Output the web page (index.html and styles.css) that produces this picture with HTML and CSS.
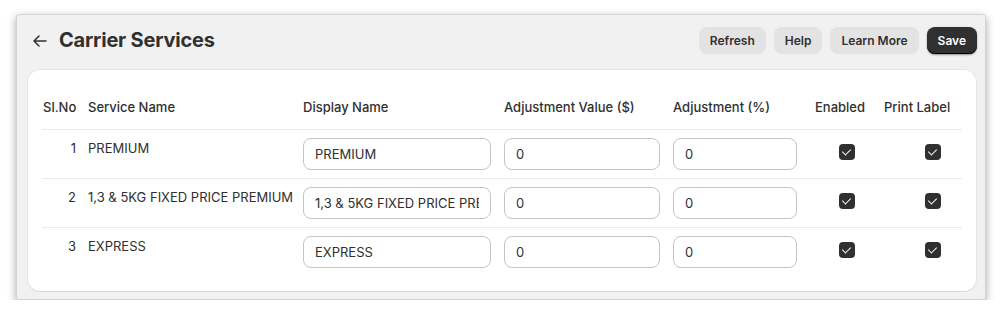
FILE: index.html
```html
<!DOCTYPE html>
<html lang="en">
<head>
    <meta charset="UTF-8">
    <meta name="viewport" content="width=device-width, initial-scale=1.0">
    <title>Carrier Services</title>
    <link rel="stylesheet" href="styles.css">
</head>
<body>
    <div class="window">
        <div class="page-header">
            <div class="title-wrap">
                <span class="back-arrow">
                    <svg width="14" height="12" viewBox="0 0 14 12" fill="none" stroke="#303030" stroke-width="1.5" stroke-linecap="round" stroke-linejoin="round">
                        <path d="M13 6H1.5M6 1L1 6l5 5"/>
                    </svg>
                </span>
                <h1>Carrier Services</h1>
            </div>
            <div class="actions">
                <button class="btn">Refresh</button>
                <button class="btn">Help</button>
                <button class="btn">Learn More</button>
                <button class="btn btn-primary">Save</button>
            </div>
        </div>

        <div class="card">
            <table class="services">
                <colgroup>
                    <col class="c-no">
                    <col class="c-name">
                    <col class="c-display">
                    <col class="c-value">
                    <col class="c-pct">
                    <col class="c-enabled">
                    <col class="c-label">
                </colgroup>
                <thead>
                    <tr>
                        <th>Sl.No</th>
                        <th>Service Name</th>
                        <th>Display Name</th>
                        <th>Adjustment Value ($)</th>
                        <th>Adjustment (%)</th>
                        <th>Enabled</th>
                        <th>Print Label</th>
                    </tr>
                </thead>
                <tbody>
                    <tr>
                        <td class="num">1</td>
                        <td class="text">PREMIUM</td>
                        <td><input class="field f-display" type="text" value="PREMIUM"></td>
                        <td><input class="field f-value" type="text" value="0"></td>
                        <td><input class="field f-pct" type="text" value="0"></td>
                        <td class="check enabled"><span class="box"></span></td>
                        <td class="check label"><span class="box"></span></td>
                    </tr>
                    <tr>
                        <td class="num">2</td>
                        <td class="text">1,3 &amp; 5KG FIXED PRICE PREMIUM</td>
                        <td><input class="field f-display" type="text" value="1,3 &amp; 5KG FIXED PRICE PREMIUM"></td>
                        <td><input class="field f-value" type="text" value="0"></td>
                        <td><input class="field f-pct" type="text" value="0"></td>
                        <td class="check enabled"><span class="box"></span></td>
                        <td class="check label"><span class="box"></span></td>
                    </tr>
                    <tr>
                        <td class="num">3</td>
                        <td class="text">EXPRESS</td>
                        <td><input class="field f-display" type="text" value="EXPRESS"></td>
                        <td><input class="field f-value" type="text" value="0"></td>
                        <td><input class="field f-pct" type="text" value="0"></td>
                        <td class="check enabled"><span class="box"></span></td>
                        <td class="check label"><span class="box"></span></td>
                    </tr>
                </tbody>
            </table>
        </div>
    </div>
</body>
</html>
```

FILE: styles.css
```css
/* Page */
body {
    margin: 0;
    background: #ffffff;
    font-family: Inter, "Noto Sans", Arial, sans-serif;
    font-size: 13px;
    color: #303030;
}
/* Screenshot window */
.window {
    margin: 14px 0 0 16px;
    width: 970px;
    height: 286px;
    box-sizing: border-box;
    padding: 0 8px 0 11px;
    background: #f1f1f1;
    border: 1px solid #d4d4d4;
    border-radius: 3px;
    box-shadow: 0 3px 9px rgba(0, 0, 0, 0.35);
}
/* Header */
.page-header {
    display: flex;
    justify-content: space-between;
    align-items: center;
    height: 50px;
    margin-bottom: 5px;
}
.title-wrap {
    display: flex;
    align-items: center;
    gap: 12px;
    padding-left: 5px;
}
.back-arrow {
    display: flex;
    padding-top: 1px;
}
h1 {
    margin: 0;
    font-size: 20px;
    font-weight: 700;
    letter-spacing: -0.2px;
}
.actions {
    display: flex;
    gap: 8px;
}
.btn {
    height: 27px;
    padding: 0 11px;
    border: none;
    border-radius: 8px;
    background: #e3e3e3;
    color: #303030;
    font-family: inherit;
    font-size: 12px;
    font-weight: 600;
    cursor: pointer;
}
.btn-primary {
    background: #303030;
    color: #ffffff;
    box-shadow: inset 0 -1px 0 #000, 0 1px 2px rgba(0, 0, 0, 0.4);
}
/* Card */
.card {
    background: #ffffff;
    border-radius: 12px;
    margin-right: 1px;
    padding: 0 14px 15px;
    box-shadow: 0 1px 0 #d9d9d9, 0 0 0 1px #e6e6e6;
}
/* Table */
.services {
    width: 920px;
    border-collapse: collapse;
    table-layout: fixed;
}
.c-no { width: 40px; }
.c-name { width: 215px; }
.c-display { width: 201px; }
.c-value { width: 169px; }
.c-pct { width: 142px; }
.c-enabled { width: 69px; }
.c-label { width: 84px; }

th {
    text-align: left;
    font-weight: 500;
    line-height: 20px;
    padding: 27px 6px 12px;
    white-space: nowrap;
}
th:first-child {
    padding-left: 1px;
}
tbody tr {
    border-top: 1px solid #ebebeb;
}
td {
    vertical-align: top;
    padding: 8px 6px 8px;
    line-height: 20px;
}
td.num {
    text-align: right;
    padding-right: 6px;
    padding-top: 8px;
}
td.text {
    white-space: nowrap;
}
.field {
    display: block;
    height: 32px;
    box-sizing: border-box;
    padding: 0 11px;
    border: 1px solid #c4c4c4;
    border-radius: 8px;
    font-family: inherit;
    font-size: 13px;
    color: #303030;
    background: #fff;
}
.f-display { width: 188px; }
.f-value { width: 156px; }
.f-pct { width: 124px; }
/* Checkboxes */
td.check {
    padding-top: 14px;
}
td.enabled {
    padding-left: 30px;
}
td.label {
    padding-left: 47px;
}
.box {
    display: block;
    width: 16px;
    height: 16px;
    border-radius: 4px;
    background: #303030;
    position: relative;
}
.box::after {
    content: "";
    position: absolute;
    left: 5px;
    top: 3px;
    width: 4px;
    height: 7px;
    border: solid #fff;
    border-width: 0 1.6px 1.6px 0;
    transform: rotate(45deg);
}
```
